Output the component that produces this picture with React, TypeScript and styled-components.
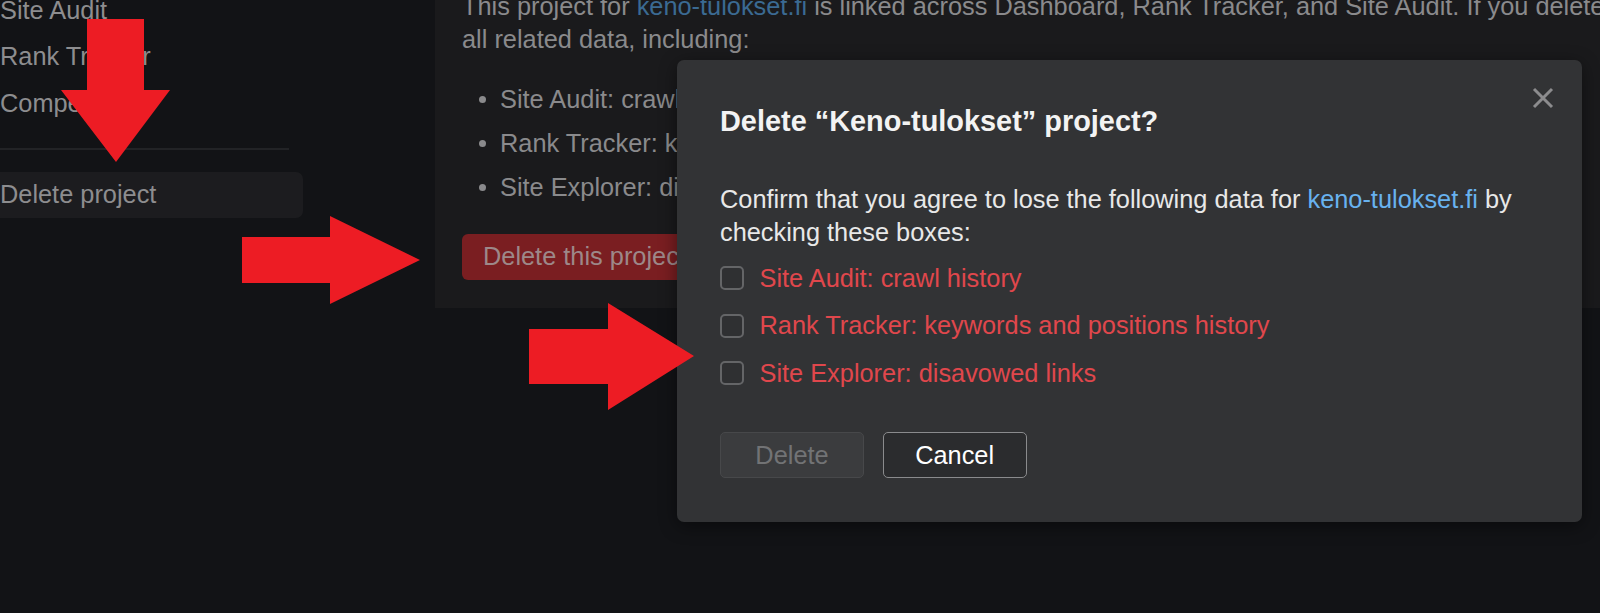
import React from "react";
import styled, { createGlobalStyle } from "styled-components";

const Global = createGlobalStyle`
  html, body { margin: 0; padding: 0; background: #121316; overflow: hidden; }
  body { font-family: "Liberation Sans", Arial, sans-serif; }
  #root { width: 1600px; height: 613px; }
`;

const Viewport = styled.div`
  position: relative;
  width: 1600px;
  height: 613px;
  overflow: hidden;
  background: #121316;
  font-family: "Liberation Sans", Arial, sans-serif;
  font-size: 25.35px;
`;

const Layout = styled.div`
  display: grid;
  grid-template-columns: 303px 1fr;
  column-gap: 132px;
  align-items: start;
  margin-top: -37px;
`;

const Sidebar = styled.nav`
  display: flex;
  flex-direction: column;
  padding-top: 24px;
`;

const NavItem = styled.div<{ $active?: boolean }>`
  height: 46.7px;
  display: flex;
  align-items: center;
  color: #8d8d8f;
  line-height: 1;
  white-space: nowrap;
  border-radius: 0 7px 7px 0;
  background: ${(p) => (p.$active ? "#1c1c1f" : "transparent")};
`;

const NavDivider = styled.hr`
  width: 289px;
  height: 1.5px;
  border: 0;
  margin: 21px 0 22px;
  background: #222326;
`;

const Panel = styled.section`
  background: #1a1a1c;
  padding: 27px 27px 28px;
  color: #8a8a8c;
`;

const Intro = styled.p`
  margin: 0;
  line-height: 33px;
  white-space: nowrap;
`;

const DimLink = styled.span`
  color: #3b6a92;
`;

const BulletList = styled.ul`
  list-style: none;
  margin: 27px 0 0;
  padding: 0;
  display: flex;
  flex-direction: column;
  gap: 11px;
`;

const BulletItem = styled.li`
  display: flex;
  align-items: center;
  line-height: 33px;
  white-space: nowrap;
  &::before {
    content: "";
    width: 7px;
    height: 7px;
    border-radius: 50%;
    background: #8a8a8c;
    margin: 0 14.5px 0 16.5px;
  }
`;

const DangerButton = styled.button`
  margin-top: 29.5px;
  height: 46px;
  padding: 0 21px;
  border: 0;
  border-radius: 6px;
  background: #7a1e21;
  color: #9d8889;
  font-family: inherit;
  font-size: 25.35px;
  white-space: nowrap;
`;

const Dialog = styled.div`
  position: absolute;
  left: 676.5px;
  top: 60px;
  width: 905px;
  box-sizing: border-box;
  padding: 43.5px 43.2px 44px 43.5px;
  background: #323335;
  border-radius: 7px;
  box-shadow: 0 4px 18px rgba(0, 0, 0, 0.45);
  color: #e8e8e8;
`;

const CloseButton = styled.button`
  position: absolute;
  top: 27px;
  right: 28px;
  width: 22px;
  height: 22px;
  padding: 0;
  border: 0;
  background: transparent;
  display: flex;
`;

const Title = styled.h2`
  margin: 0;
  font-size: 28.9px;
  line-height: 34.6px;
  font-weight: 700;
  color: #f3f3f3;
`;

const Body = styled.p`
  margin: 45px 0 0;
  line-height: 33px;
`;

const Link = styled.span`
  color: #68b2ef;
`;

const CheckList = styled.div`
  margin-top: 12.5px;
  display: flex;
  flex-direction: column;
  gap: 14.5px;
`;

const CheckRow = styled.label`
  display: flex;
  align-items: center;
  gap: 15.5px;
  height: 33px;
  color: #e0474c;
`;

const Box = styled.span`
  width: 24px;
  height: 24px;
  box-sizing: border-box;
  border: 2px solid #646567;
  border-radius: 5px;
  background: #2f3032;
  flex: none;
`;

const Actions = styled.div`
  margin-top: 42.6px;
  display: flex;
  gap: 18.6px;
`;

const ActionButton = styled.button<{ $variant: "disabled" | "outline" }>`
  width: 144px;
  height: 46px;
  box-sizing: border-box;
  border-radius: 5px;
  font-family: inherit;
  font-size: 25.35px;
  border: 1.5px solid ${(p) => (p.$variant === "disabled" ? "#47484a" : "#8a8b8d")};
  background: ${(p) => (p.$variant === "disabled" ? "#3b3c3e" : "#2b2c2e")};
  color: ${(p) => (p.$variant === "disabled" ? "#727375" : "#ffffff")};
`;

const Annotations = styled.svg`
  position: absolute;
  left: 0;
  top: 0;
  width: 1600px;
  height: 613px;
  pointer-events: none;
`;

const ARROW = "#ed1c24";

export default function App() {
  return (
    <>
      <Global />
      <Viewport>
        <Layout>
          <Sidebar>
            <NavItem>Site Audit</NavItem>
            <NavItem>Rank Tracker</NavItem>
            <NavItem>Competitors</NavItem>
            <NavDivider />
            <NavItem $active>Delete project</NavItem>
          </Sidebar>
          <Panel>
            <Intro>
              This project for <DimLink>keno-tulokset.fi</DimLink> is linked across Dashboard, Rank Tracker, and Site Audit. If you delete it, you will lose
              <br />
              all related data, including:
            </Intro>
            <BulletList>
              <BulletItem>Site Audit: crawl history</BulletItem>
              <BulletItem>Rank Tracker: keywords and positions history</BulletItem>
              <BulletItem>Site Explorer: disavowed links</BulletItem>
            </BulletList>
            <DangerButton>Delete this project</DangerButton>
          </Panel>
        </Layout>

        <Dialog>
          <CloseButton aria-label="Close">
            <svg width="22" height="22" viewBox="0 0 22 22">
              <path d="M2 2 L20 20 M20 2 L2 20" stroke="#8c8c8e" strokeWidth="3" strokeLinecap="butt" />
            </svg>
          </CloseButton>
          <Title>Delete “Keno-tulokset” project?</Title>
          <Body>
            Confirm that you agree to lose the following data for <Link>keno-tulokset.fi</Link> by checking these boxes:
          </Body>
          <CheckList>
            <CheckRow>
              <Box />
              Site Audit: crawl history
            </CheckRow>
            <CheckRow>
              <Box />
              Rank Tracker: keywords and positions history
            </CheckRow>
            <CheckRow>
              <Box />
              Site Explorer: disavowed links
            </CheckRow>
          </CheckList>
          <Actions>
            <ActionButton $variant="disabled">Delete</ActionButton>
            <ActionButton $variant="outline">Cancel</ActionButton>
          </Actions>
        </Dialog>

        <Annotations viewBox="0 0 1600 613">
          <polygon fill={ARROW} points="87,19 144,19 144,90 170,90 116,162 61,90 87,90" />
          <polygon fill={ARROW} points="242,237 330,237 330,216 420,260 330,304 330,283 242,283" />
          <polygon fill={ARROW} points="529,329 608,329 608,303 694,356 608,410 608,384 529,384" />
        </Annotations>
      </Viewport>
    </>
  );
}
